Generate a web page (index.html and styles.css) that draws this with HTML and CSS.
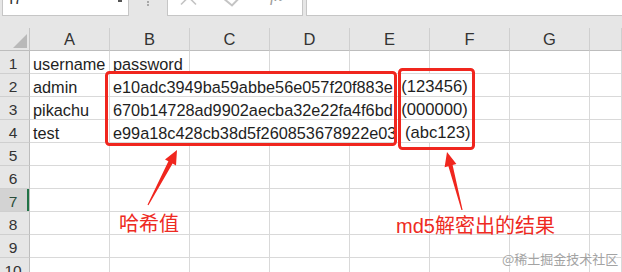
FILE: index.html
```html
<!DOCTYPE html>
<html lang="zh-CN">
<head>
<meta charset="utf-8">
<title>md5</title>
<link rel="stylesheet" href="styles.css">
</head>
<body>
<div class="app">
  <div class="toolbar">
    <div class="namebox"><span class="nb-text">I7</span><span class="nb-caret"></span></div>
    <div class="tb-sep"><i></i><i></i></div>
    <div class="fx-box">
      <svg class="fx-icons" width="135" height="15" viewBox="167 0 135 15">
        <path d="M181 -10.5 L196 4.5 M196 -10.5 L181 4.5" stroke="#c4c4c4" stroke-width="1.6" fill="none"/>
        <path d="M223 -2 L232 5.5 L246 -9" stroke="#c4c4c4" stroke-width="2" fill="none"/>
      </svg>
      <span class="fx-text">fx</span>
    </div>
    <div class="formula-input"></div>
  </div>
  <div class="band"></div>

  <div class="sheet">
    <div class="corner"><span class="corner-tri"></span></div>
    <div class="ch">A</div><div class="ch">B</div><div class="ch">C</div><div class="ch">D</div>
    <div class="ch">E</div><div class="ch">F</div><div class="ch">G</div><div class="ch"></div>

    <div class="rh">1</div>
    <div class="c">username</div><div class="c">password</div><div class="c"></div><div class="c"></div>
    <div class="c"></div><div class="c"></div><div class="c"></div><div class="c"></div>

    <div class="rh">2</div>
    <div class="c">admin</div>
    <div class="c span5">e10adc3949ba59abbe56e057f20f883e <span class="plain">(123456)</span></div>
    <div class="c"></div><div class="c"></div>

    <div class="rh">3</div>
    <div class="c">pikachu</div>
    <div class="c span5">670b14728ad9902aecba32e22fa4f6bd <span class="plain">(000000)</span></div>
    <div class="c"></div><div class="c"></div>

    <div class="rh">4</div>
    <div class="c">test</div>
    <div class="c span5">e99a18c428cb38d5f260853678922e03 <span class="plain">(abc123)</span></div>
    <div class="c"></div><div class="c"></div>

    <div class="rh">5</div>
    <div class="c"></div><div class="c"></div><div class="c"></div><div class="c"></div>
    <div class="c"></div><div class="c"></div><div class="c"></div><div class="c"></div>
    <div class="rh">6</div>
    <div class="c"></div><div class="c"></div><div class="c"></div><div class="c"></div>
    <div class="c"></div><div class="c"></div><div class="c"></div><div class="c"></div>
    <div class="rh rh-active">7</div>
    <div class="c"></div><div class="c"></div><div class="c"></div><div class="c"></div>
    <div class="c"></div><div class="c"></div><div class="c"></div><div class="c"></div>
    <div class="rh">8</div>
    <div class="c"></div><div class="c"></div><div class="c"></div><div class="c"></div>
    <div class="c"></div><div class="c"></div><div class="c"></div><div class="c"></div>
    <div class="rh">9</div>
    <div class="c"></div><div class="c"></div><div class="c"></div><div class="c"></div>
    <div class="c"></div><div class="c"></div><div class="c"></div><div class="c"></div>
    <div class="rh">10</div>
    <div class="c"></div><div class="c"></div><div class="c"></div><div class="c"></div>
    <div class="c"></div><div class="c"></div><div class="c"></div><div class="c"></div>
  </div>

  <!-- annotation layer: highlight boxes and arrows drawn over the sheet -->
  <svg class="marks" width="622" height="272" viewBox="0 0 622 272">
    <rect x="106.5" y="72.5" width="289" height="72" rx="3" fill="none" stroke="#f0261e" stroke-width="3"/>
    <rect x="399.5" y="69.5" width="74" height="79" rx="3" fill="none" stroke="#f0261e" stroke-width="3"/>
    <polygon points="147.5,204.7 168.4,161.3 165,159.5 177,150 176,165.4 172.6,163.5 148.5,205.3" fill="#f0261e"/>
    <polygon points="461.4,210.1 448.4,166.2 444.6,167.2 447,152 456.4,164 452.6,165 462.6,209.9" fill="#f0261e"/>
  </svg>
  <div class="label label-hash">哈希值</div>
  <div class="label label-result">md5解密出的结果</div>
  <div class="watermark">@稀土掘金技术社区</div>
</div>
</body>
</html>
```

FILE: styles.css
```css
* {
  box-sizing: border-box;
}

html, body {
  margin: 0;
  padding: 0;
  background: #ffffff;
}

.app {
  position: relative;
  width: 622px;
  height: 272px;
  overflow: hidden;
  background: #e6e6e6;
  font-family: "Liberation Sans", "Noto Sans CJK SC", sans-serif;
}

/* ---------- formula bar ---------- */
.toolbar {
  display: flex;
  height: 16px;
}

.namebox {
  position: relative;
  margin-left: 2px;
  width: 127px;
  height: 16px;
  background: #fff;
  border: 1px solid #c6c6c6;
  border-top: 0;
  overflow: hidden;
}

.nb-text {
  display: block;
  margin-top: -11px;
  padding-left: 6px;
  font-size: 16px;
  line-height: 20px;
  color: #333;
}

.nb-caret {
  position: absolute;
  left: 115px;
  top: 0;
  width: 4px;
  height: 2px;
  background: #555;
}

.tb-sep {
  width: 38px;
  display: flex;
  flex-direction: column;
  align-items: center;
  gap: 1px;
  padding-top: 1px;
}

.tb-sep i {
  display: block;
  width: 2px;
  height: 2px;
  background: #a8a8a8;
}

.fx-box {
  position: relative;
  width: 136px;
  height: 16px;
  background: #fff;
  border: 1px solid #c6c6c6;
  border-top: 0;
  overflow: hidden;
}

.fx-icons {
  position: absolute;
  left: -1px;
  top: 0;
}

.fx-text {
  position: absolute;
  left: 102px;
  top: -14px;
  font-family: "Liberation Serif", serif;
  font-style: italic;
  font-size: 17px;
  line-height: 20px;
  color: #9c9c9c;
}

.formula-input {
  flex: 1;
  margin-left: 3px;
  height: 16px;
  background: #fff;
  border: 1px solid #c6c6c6;
  border-top: 0;
  border-right: 0;
}

.band {
  height: 12px;
}

/* ---------- grid ---------- */
.sheet {
  display: grid;
  grid-template-columns: 30px repeat(7, 80px) 1fr;
  grid-template-rows: 23px;
  grid-auto-rows: 23px;
  background: #fff;
}

.corner {
  position: relative;
  background: #e6e6e6;
  border-right: 1px solid #c4c4c4;
  border-bottom: 1px solid #bdbdbd;
}

.corner-tri {
  position: absolute;
  right: 2px;
  bottom: 2px;
  width: 0;
  height: 0;
  border-left: 14px solid transparent;
  border-bottom: 14px solid #b9b9b9;
}

.ch {
  display: flex;
  align-items: flex-end;
  justify-content: center;
  padding-bottom: 1px;
  background: #e6e6e6;
  border-right: 1px solid #cfcfcf;
  border-bottom: 1px solid #bdbdbd;
  font-size: 16.5px;
  line-height: 20px;
  color: #333;
}

.rh {
  display: flex;
  align-items: flex-end;
  justify-content: center;
  padding-right: 3px;
  background: #e6e6e6;
  border-right: 1px solid #bdbdbd;
  border-bottom: 1px solid #cfcfcf;
  font-size: 15.5px;
  line-height: 19px;
  color: #333;
}

.rh-active {
  background: #d3d3d3;
  color: #2a4d3a;
  box-shadow: inset -2px 0 0 #217346;
}

.c {
  display: flex;
  align-items: flex-end;
  padding-left: 3px;
  border-right: 1px solid #d9d9d9;
  border-bottom: 1px solid #d9d9d9;
  font-size: 16.3px;
  line-height: 18px;
  color: #1e1e1e;
  white-space: pre;
  overflow: visible;
}

.plain {
  margin-left: 4px;
  font-size: 16.6px;
}

.span5 {
  grid-column: span 5;
}

/* ---------- annotations ---------- */
.marks {
  position: absolute;
  left: 0;
  top: 0;
  pointer-events: none;
}

.label {
  position: absolute;
  font-family: "Noto Sans CJK SC", "Liberation Sans", sans-serif;
  font-size: 20px;
  line-height: 20px;
  color: #ee2a22;
  white-space: nowrap;
}

.label-hash {
  left: 119px;
  top: 213px;
}

.label-result {
  left: 396px;
  top: 216px;
  font-family: "Liberation Sans", "Noto Sans CJK SC", sans-serif;
}

.watermark {
  position: absolute;
  left: 502px;
  top: 250px;
  font-family: "Noto Sans CJK SC", sans-serif;
  font-size: 13px;
  line-height: 17px;
  color: #a3a3a3;
  white-space: nowrap;
  text-shadow: 0 0 2px #fff;
}
```
